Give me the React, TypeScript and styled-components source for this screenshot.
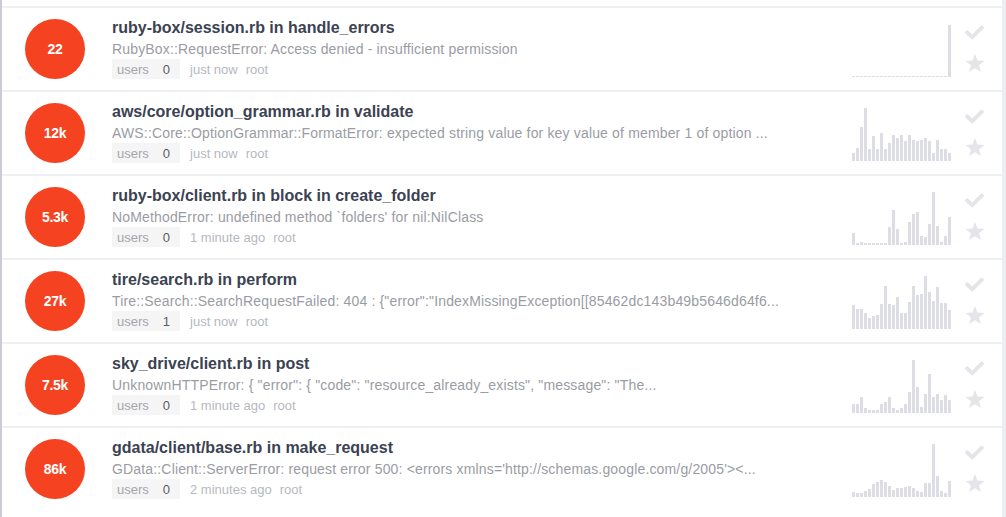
import styled, { createGlobalStyle } from 'styled-components';
import { FaCheck } from 'react-icons/fa';

const GlobalStyle = createGlobalStyle`
    * {
        box-sizing: border-box;
    }
    body {
        margin: 0;
        background: #ffffff;
        font-family: "Liberation Sans", Arial, sans-serif;
    }
`;

const Frame = styled.div`
    width: 1006px;
    height: 517px;
    overflow: hidden;
    border-left: 2px solid #c9cdd3;
    border-right: 4px solid #eceef2;
    background: #ffffff;
`;

const List = styled.div`
    padding-top: 6px;
    display: flex;
    flex-direction: column;
`;

const Row = styled.div`
    height: 84px;
    border-top: 2px solid #eff0f4;
    display: flex;
    align-items: flex-start;
    padding-left: 23px;
`;

const Count = styled.div`
    width: 60px;
    height: 60px;
    margin-top: 11px;
    border-radius: 50%;
    background: #f54321;
    color: #ffffff;
    font-size: 14px;
    font-weight: 700;
    letter-spacing: -0.3px;
    display: flex;
    align-items: center;
    justify-content: center;
    flex-shrink: 0;
`;

const Body = styled.div`
    flex: 1;
    min-width: 0;
    margin-left: 27px;
    padding-top: 10px;
`;

const Title = styled.div`
    font-size: 16px;
    line-height: 20px;
    font-weight: 700;
    color: #3b4251;
    white-space: nowrap;
`;

const Message = styled.div`
    margin-top: 1px;
    font-size: 14px;
    line-height: 20px;
    letter-spacing: 0.16px;
    color: #9a9ca4;
    white-space: nowrap;
    overflow: hidden;
`;

const Meta = styled.div`
    margin-top: 0;
    display: flex;
    align-items: center;
    height: 20px;
    font-size: 13px;
`;

const Badge = styled.span`
    height: 20px;
    display: flex;
    align-items: center;
    gap: 14px;
    padding: 0 10px 0 5px;
    background: #f5f5f6;
    color: #a3a5ab;
`;

const BadgeValue = styled.span`
    color: #5a5d64;
`;

const MetaText = styled.span<{ $first?: boolean }>`
    margin-left: ${(p) => (p.$first ? '10px' : '8px')};
    color: #b6b8bf;
`;

const Spark = styled.div`
    width: 100px;
    height: 53px;
    margin-top: 16px;
    display: flex;
    align-items: flex-end;
    gap: 1px;
    flex-shrink: 0;
`;

const Bar = styled.div`
    width: 3px;
    background: #dcdee4;
`;

const Actions = styled.div`
    width: 19px;
    margin: 0 18px 0 13px;
    padding-top: 15px;
    display: flex;
    flex-direction: column;
    align-items: center;
    gap: 12px;
    color: #e4e5e9;
    flex-shrink: 0;
`;

const Star = () => (
    <svg width="20" height="19" viewBox="0 0 20 19">
        <polygon
            fill="#e4e5e9"
            points="10,0 12.47,6.6 19.51,6.91 13.99,11.3 15.88,18.09 10,14.2 4.12,18.09 6.01,11.3 0.49,6.91 7.53,6.6"
        />
    </svg>
);

type Issue = {
    count: string;
    title: string;
    message: string;
    users: number;
    time: string;
    bars: number[];
};

const issues: Issue[] = [
    {
        count: '22',
        title: 'ruby-box/session.rb in handle_errors',
        message: 'RubyBox::RequestError: Access denied - insufficient permission',
        users: 0,
        time: 'just now',
        bars: [...Array(24).fill(1), 52],
    },
    {
        count: '12k',
        title: 'aws/core/option_grammar.rb in validate',
        message: 'AWS::Core::OptionGrammar::FormatError: expected string value for key value of member 1 of option ...',
        users: 0,
        time: 'just now',
        bars: [8, 13, 34, 53, 12, 25, 12, 28, 12, 18, 26, 23, 26, 20, 26, 21, 20, 21, 23, 20, 8, 21, 12, 12, 8],
    },
    {
        count: '5.3k',
        title: 'ruby-box/client.rb in block in create_folder',
        message: 'NoMethodError: undefined method `folders\' for nil:NilClass',
        users: 0,
        time: '1 minute ago',
        bars: [12, 2, 3, 2, 2, 2, 2, 2, 2, 18, 35, 16, 2, 3, 23, 31, 33, 9, 8, 21, 53, 19, 3, 9, 28],
    },
    {
        count: '27k',
        title: 'tire/search.rb in perform',
        message: 'Tire::Search::SearchRequestFailed: 404 : {"error":"IndexMissingException[[85462dc143b49b5646d64f6...',
        users: 1,
        time: 'just now',
        bars: [24, 20, 20, 16, 11, 13, 14, 25, 43, 25, 24, 32, 16, 16, 27, 43, 34, 35, 53, 37, 28, 42, 26, 26, 19],
    },
    {
        count: '7.5k',
        title: 'sky_drive/client.rb in post',
        message: 'UnknownHTTPError: { "error": { "code": "resource_already_exists", "message": "The...',
        users: 0,
        time: '1 minute ago',
        bars: [9, 9, 16, 5, 3, 3, 3, 9, 11, 16, 5, 3, 5, 9, 21, 53, 26, 6, 19, 39, 16, 19, 13, 18, 13],
    },
    {
        count: '86k',
        title: 'gdata/client/base.rb in make_request',
        message: 'GData::Client::ServerError: request error 500: <errors xmlns=\'http://schemas.google.com/g/2005\'><...',
        users: 0,
        time: '2 minutes ago',
        bars: [5, 4, 4, 6, 8, 13, 15, 17, 15, 11, 7, 9, 9, 10, 11, 9, 6, 5, 14, 14, 53, 21, 6, 4, 16],
    },
];

const App = () => {
    return (
        <Frame>
            <GlobalStyle />
            <List>
                {issues.map((issue) => (
                    <Row key={issue.title}>
                        <Count>{issue.count}</Count>
                        <Body>
                            <Title>{issue.title}</Title>
                            <Message>{issue.message}</Message>
                            <Meta>
                                <Badge>
                                    users
                                    <BadgeValue>{issue.users}</BadgeValue>
                                </Badge>
                                <MetaText $first>{issue.time}</MetaText>
                                <MetaText>root</MetaText>
                            </Meta>
                        </Body>
                        <Spark>
                            {issue.bars.map((h, i) => (
                                <Bar key={i} style={{ height: h }} />
                            ))}
                        </Spark>
                        <Actions>
                            <FaCheck size={19} />
                            <Star />
                        </Actions>
                    </Row>
                ))}
            </List>
        </Frame>
    );
};

export default App;
